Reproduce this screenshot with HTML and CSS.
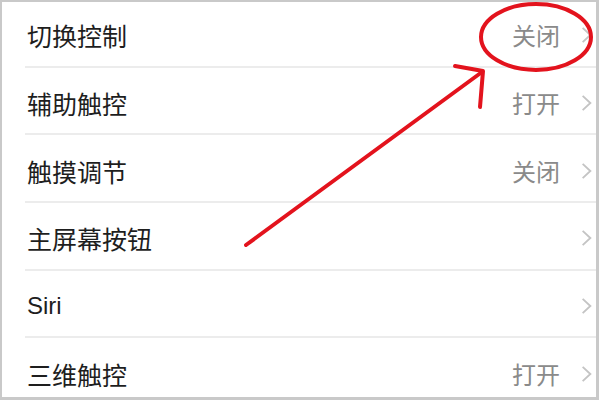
FILE: index.html
```html
<!DOCTYPE html>
<html lang="zh-CN">
<head>
    <meta charset="UTF-8">
    <meta name="viewport" content="width=device-width, initial-scale=1.0">
    <title>辅助功能</title>
    <link rel="stylesheet" href="styles.css">
</head>
<body>
    <div class="frame">
        <ul class="list">
            <li class="row">
                <span class="label">切换控制</span>
                <span class="value">关闭</span>
                <svg class="chev" viewBox="0 0 10 16"><polyline points="1.5,1.5 8.5,8 1.5,14.5"/></svg>
            </li>
            <li class="row">
                <span class="label">辅助触控</span>
                <span class="value">打开</span>
                <svg class="chev" viewBox="0 0 10 16"><polyline points="1.5,1.5 8.5,8 1.5,14.5"/></svg>
            </li>
            <li class="row">
                <span class="label">触摸调节</span>
                <span class="value">关闭</span>
                <svg class="chev" viewBox="0 0 10 16"><polyline points="1.5,1.5 8.5,8 1.5,14.5"/></svg>
            </li>
            <li class="row">
                <span class="label">主屏幕按钮</span>
                <svg class="chev" viewBox="0 0 10 16"><polyline points="1.5,1.5 8.5,8 1.5,14.5"/></svg>
            </li>
            <li class="row">
                <span class="label latin">Siri</span>
                <svg class="chev" viewBox="0 0 10 16"><polyline points="1.5,1.5 8.5,8 1.5,14.5"/></svg>
            </li>
            <li class="row">
                <span class="label">三维触控</span>
                <span class="value">打开</span>
                <svg class="chev" viewBox="0 0 10 16"><polyline points="1.5,1.5 8.5,8 1.5,14.5"/></svg>
            </li>
        </ul>

        <!-- 标注 -->
        <svg class="mark" viewBox="0 0 599 400">
            <ellipse cx="536" cy="37" rx="55" ry="33"/>
            <line x1="246" y1="245" x2="482" y2="72"/>
            <polyline points="455,66 483,71 480,107"/>
        </svg>
    </div>
</body>
</html>
```

FILE: styles.css
```css
*{
    padding: 0;
    margin: 0;
}
li{
    list-style: none;
}
body{
    background-color: white;
    font-family: "Noto Sans CJK SC", "Noto Sans", sans-serif;
}
.frame{
    position: relative;
    width: 599px;
    height: 400px;
    box-sizing: border-box;
    border: 2px solid #c9c9c9;
    border-right-width: 3px;
    border-bottom-width: 3px;
    background-color: white;
    overflow: hidden;
}
.list{
    margin-top: -2px;
    margin-left: 23px;
}
.row{
    display: flex;
    align-items: center;
    height: 65.7px;
    box-sizing: content-box;
    border-bottom: 2px solid #ececec;
    padding-right: 4px;
}
.label{
    flex: 1;
    padding-left: 2px;
    padding-top: 5px;
    font-size: 25px;
    line-height: 30px;
    color: #1e1e1e;
}
.latin{
    font-family: "Liberation Sans", "Noto Sans CJK SC", sans-serif;
    font-size: 24px;
}
.value{
    padding-top: 5px;
    font-size: 24px;
    line-height: 30px;
    color: #8a8a8a;
    margin-right: 21px;
}
.chev{
    width: 11px;
    height: 18px;
    margin-top: 5px;
    fill: none;
    stroke: #c4c4c4;
    stroke-width: 1.7;
}
.mark{
    position: absolute;
    top: -2px;
    left: -2px;
    width: 599px;
    height: 400px;
    fill: none;
    stroke: #e3131d;
    stroke-width: 4;
    stroke-linecap: round;
    stroke-linejoin: round;
}
```
